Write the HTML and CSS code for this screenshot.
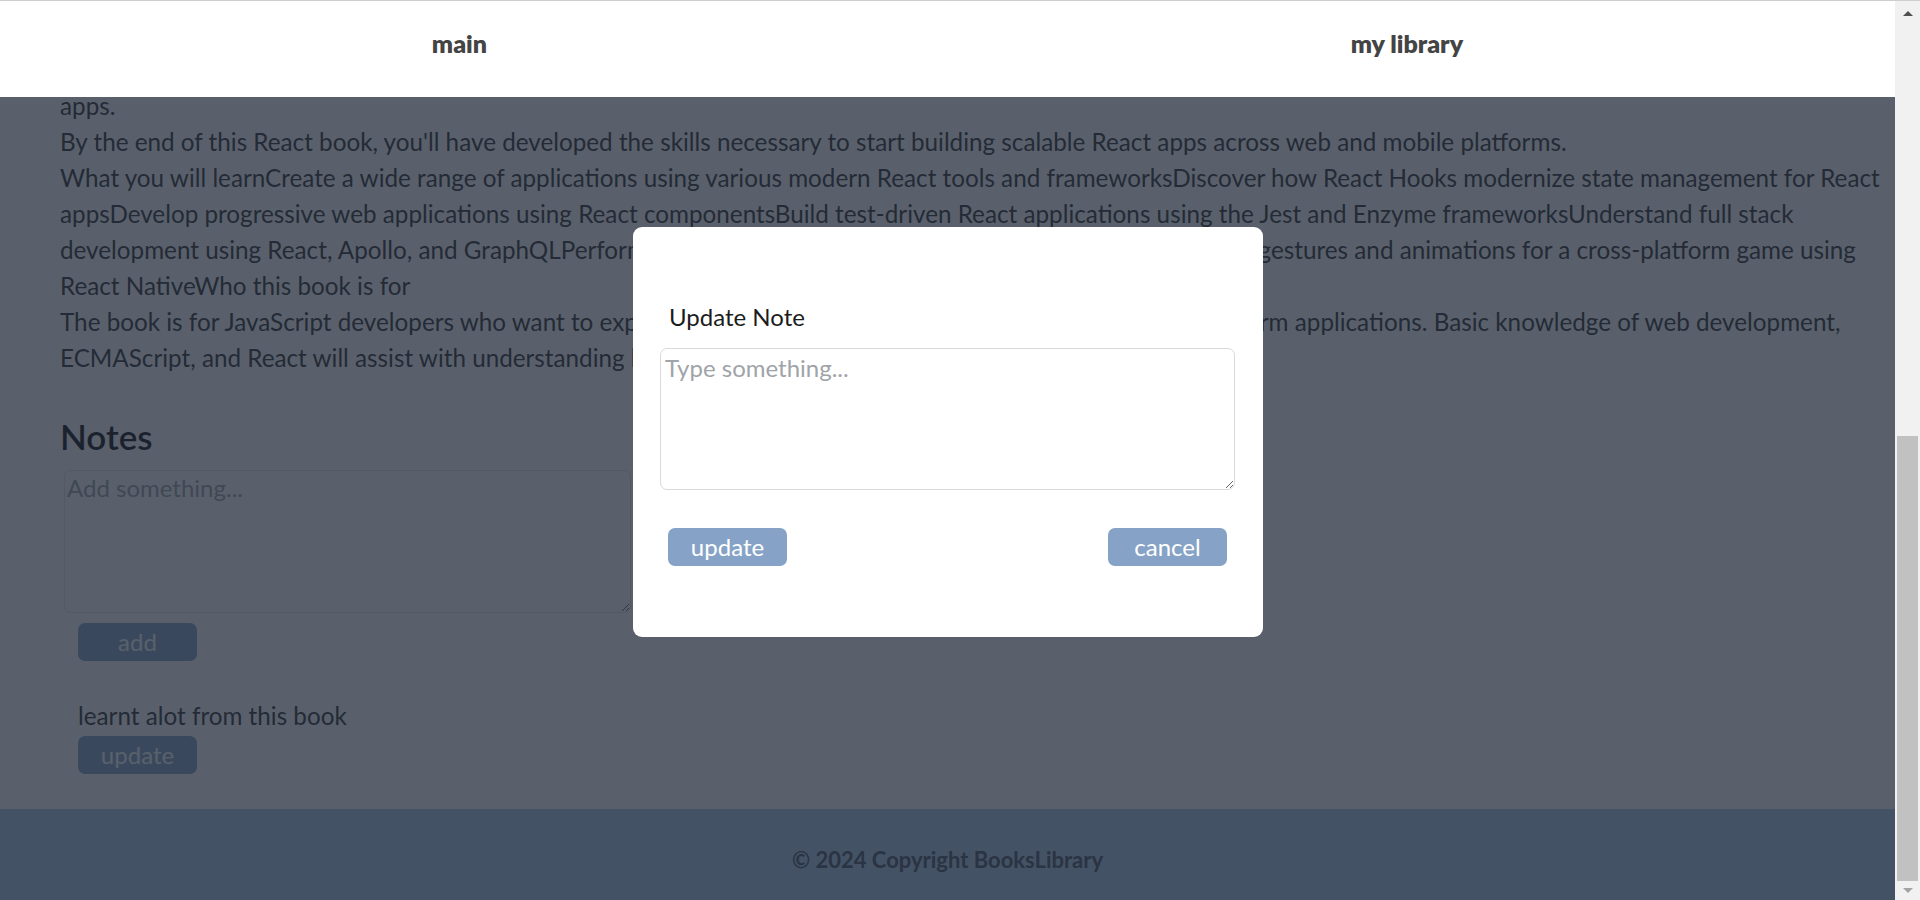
FILE: index.html
```html
<!DOCTYPE html>
<html lang="en">
<head>
<meta charset="utf-8">
<title>BooksLibrary</title>
<link rel="stylesheet" href="styles.css">
</head>
<body>
<div class="app">
  <div class="viewport">
    <header class="topnav">
      <a class="navlink" href="#">main</a>
      <a class="navlink" href="#">my library</a>
    </header>

    <main class="page">
      <p class="desc">apps.<br>By the end of this React book, you'll have developed the skills necessary to start building scalable React apps across web and mobile platforms.<br>What you will learnCreate a wide range of applications using various modern React tools and frameworksDiscover how React Hooks modernize state management for React appsDevelop progressive web applications using React componentsBuild test-driven React applications using the Jest and Enzyme frameworksUnderstand full stack development using React, Apollo, and GraphQLPerform server-side rendering using React and Next.jsBuild touch gestures and animations for a cross-platform game using React NativeWho this book is for<br>The book is for JavaScript developers who want to explore React tooling and frameworks for building cross-platform applications. Basic knowledge of web development, ECMAScript, and React will assist with understanding key concepts covered in this book.</p>

      <section class="notes">
        <h2 class="notes-title">Notes</h2>
        <textarea class="note-input" placeholder="Add something..."></textarea>
        <button class="btn btn-add" type="button">add</button>
        <div class="note-item">
          <p class="note-text">learnt alot from this book</p>
          <button class="btn btn-note" type="button">update</button>
        </div>
      </section>
    </main>

    <footer class="footer">© 2024 Copyright BooksLibrary</footer>

    <div class="overlay">
      <div class="modal">
        <label class="modal-label" for="upd">Update Note</label>
        <textarea id="upd" class="modal-input" placeholder="Type something..."></textarea>
        <div class="modal-actions">
          <button class="btn" type="button">update</button>
          <button class="btn" type="button">cancel</button>
        </div>
      </div>
    </div>
  </div>

  <div class="scrollbar">
    <div class="sb-btn sb-btn-up"><span class="sb-arrow-up"></span></div>
    <div class="sb-track"><div class="sb-thumb"></div></div>
    <div class="sb-btn sb-btn-down"><span class="sb-arrow-down"></span></div>
  </div>
</div>
</body>
</html>
```
FILE: styles.css
```css
html, body {
  height: 100%;
}
body {
  margin: 0;
  border-top: 1px solid #cdcdcd;
  font-family: Lato, "Liberation Sans", sans-serif;
  overflow: hidden;
  background: #fff;
}
.app {
  display: flex;
  height: 899px;
}
.viewport {
  position: relative;
  flex: 1;
  display: flex;
  flex-direction: column;
  overflow: hidden;
  background: #fff;
}

/* fixed top navigation (lies over the scrolled content) */
.topnav {
  position: absolute;
  top: 0;
  left: 0;
  right: 0;
  z-index: 20;
  height: 96px;
  box-sizing: border-box;
  padding-top: 27px;
  background: #fff;
  display: flex;
  justify-content: space-around;
  align-items: flex-start;
}
.navlink {
  font-size: 25px;
  font-weight: 800;
  line-height: 30px;
  color: #444444;
  text-decoration: none;
}

/* page content */
.page {
  flex: none;
  padding: 87px 10px 0 60px;
}
.desc {
  margin: 0;
  font-size: 24.25px;
  line-height: 36px;
  color: #333333;
}
.notes-title {
  margin: 39px 0 0;
  font-size: 35px;
  font-weight: 600;
  line-height: 42px;
  color: #111111;
}
.note-input {
  display: block;
  margin: 13px 0 0 4px;
  width: 567px;
  height: 143px;
  box-sizing: border-box;
  padding: 2px;
  border: 1px solid #e3e5e8;
  border-radius: 6px;
  font-family: Lato, "Liberation Sans", sans-serif;
  font-size: 24px;
  color: #333;
  background: #fff;
}
.note-input::placeholder,
.modal-input::placeholder {
  color: #a0a3a8;
}
.btn {
  width: 119px;
  height: 38px;
  padding: 0;
  border: 0;
  border-radius: 7px;
  background: #86a3c7;
  color: #ffffff;
  font-family: Lato, "Liberation Sans", sans-serif;
  font-size: 24px;
  line-height: 38px;
}
.btn-add {
  display: block;
  margin: 10px 0 0 18px;
}
.note-item {
  margin: 37px 0 0 18px;
}
.note-text {
  margin: 0;
  font-size: 24.25px;
  line-height: 36px;
  color: #333333;
}
.btn-note {
  display: block;
  margin-top: 2px;
}

/* footer */
.footer {
  flex: 1;
  margin-top: 35px;
  padding-top: 38px;
  background: #adc7ec;
  text-align: center;
  font-size: 22px;
  font-weight: 700;
  line-height: 26px;
  color: #4b5563;
}

/* modal */
.overlay {
  position: absolute;
  inset: 0;
  z-index: 10;
  background: rgba(31, 41, 55, 0.74);
  display: flex;
  justify-content: center;
  align-items: flex-start;
  padding-top: 226px;
}
.modal {
  width: 630px;
  box-sizing: border-box;
  padding: 72px 27.5px 71px;
  background: #ffffff;
  border-radius: 9px;
  display: flex;
  flex-direction: column;
}
.modal-label {
  padding-left: 9px;
  font-size: 24px;
  line-height: 36px;
  color: #1c1c1c;
}
.modal-input {
  margin-top: 13px;
  width: 100%;
  height: 142px;
  box-sizing: border-box;
  padding: 4px;
  border: 1px solid #dadada;
  border-radius: 7px;
  font-family: Lato, "Liberation Sans", sans-serif;
  font-size: 24px;
  color: #333;
}
.modal-actions {
  margin-top: 38px;
  padding: 0 8px;
  display: flex;
  justify-content: space-between;
}

/* window scrollbar */
.scrollbar {
  width: 25px;
  flex: none;
  background: #f1f1f1;
  display: flex;
  flex-direction: column;
}
.sb-btn {
  flex: none;
  display: flex;
  justify-content: center;
  align-items: center;
}
.sb-btn-up {
  height: 25px;
}
.sb-btn-down {
  height: 19px;
}
.sb-arrow-up {
  width: 0;
  height: 0;
  border-left: 5px solid transparent;
  border-right: 5px solid transparent;
  border-bottom: 5px solid #505050;
}
.sb-arrow-down {
  width: 0;
  height: 0;
  border-left: 5px solid transparent;
  border-right: 5px solid transparent;
  border-top: 5px solid #a3a3a3;
}
.sb-track {
  flex: 1;
  display: flex;
  flex-direction: column;
  justify-content: flex-end;
  padding: 0 2px;
}
.sb-thumb {
  height: 445px;
  background: #c1c1c1;
}
```
